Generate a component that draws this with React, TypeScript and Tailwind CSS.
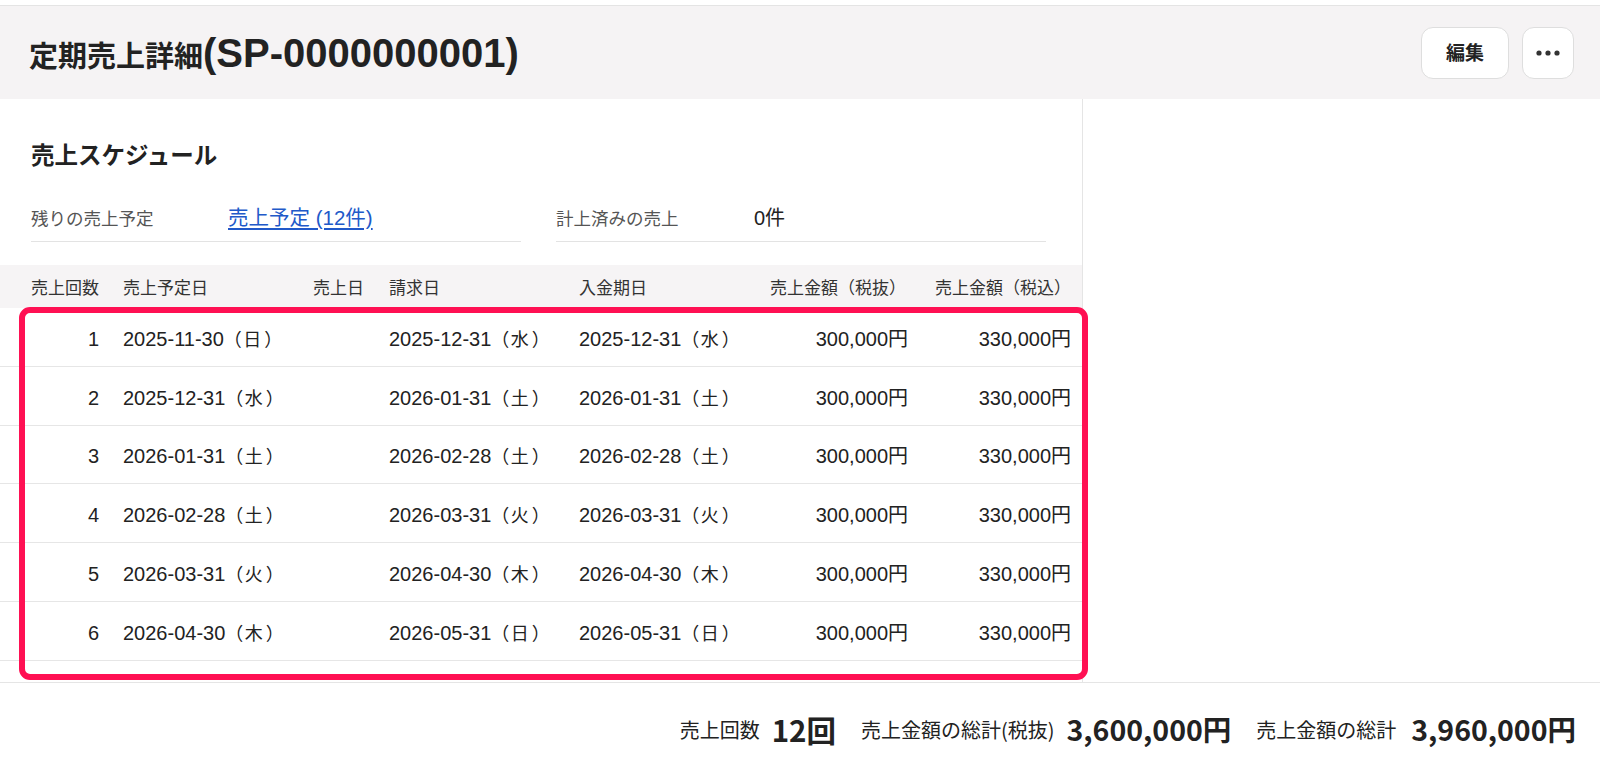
import React from 'react';

const latin = "font-['Liberation_Sans','Noto_Sans_CJK_JP',sans-serif]";
const cjk = "font-['Noto_Sans_CJK_JP','Liberation_Sans',sans-serif]";

type Row = {
  no: number;
  planned: [string, string];
  invoice: [string, string];
  payment: [string, string];
};

const rows: Row[] = [
  { no: 1, planned: ['2025-11-30', '日'], invoice: ['2025-12-31', '水'], payment: ['2025-12-31', '水'] },
  { no: 2, planned: ['2025-12-31', '水'], invoice: ['2026-01-31', '土'], payment: ['2026-01-31', '土'] },
  { no: 3, planned: ['2026-01-31', '土'], invoice: ['2026-02-28', '土'], payment: ['2026-02-28', '土'] },
  { no: 4, planned: ['2026-02-28', '土'], invoice: ['2026-03-31', '火'], payment: ['2026-03-31', '火'] },
  { no: 5, planned: ['2026-03-31', '火'], invoice: ['2026-04-30', '木'], payment: ['2026-04-30', '木'] },
  { no: 6, planned: ['2026-04-30', '木'], invoice: ['2026-05-31', '日'], payment: ['2026-05-31', '日'] },
  { no: 7, planned: ['2026-05-31', '日'], invoice: ['2026-06-30', '火'], payment: ['2026-06-30', '火'] },
];

const cols = 'grid grid-cols-[111px_189px_77px_190px_173px_178px_165px]';

// 日付 + 全角カッコの曜日
const DateCell = ({ d }: { d: [string, string] }) => (
  <div className="pl-3 whitespace-nowrap">
    <span className="text-[20px]">{d[0]}</span>
    <span className={`${cjk} text-[18px]`}>
      <span className="inline-block w-[18px] text-center">（</span>
      <span className="inline-block w-[21px] text-center">{d[1]}</span>
      <span className="inline-block w-[21px] text-center">）</span>
    </span>
  </div>
);

const App: React.FC = () => {
  return (
    <div className={`${latin} relative h-[776px] flex flex-col bg-white text-[#222] overflow-hidden`}>
      <div className="h-[6px] border-b border-[#e4e4e4] shrink-0" />

      {/* page header */}
      <header className="h-[93px] shrink-0 bg-[#f5f3f4] flex items-center justify-between pl-[29px] pr-[26px]">
        <h1 className="font-bold text-[#222] whitespace-nowrap leading-none">
          <span className={`${cjk} text-[29px]`}>定期売上詳細</span>
          <span className="text-[40px]">(SP-0000000001)</span>
        </h1>
        <div className="flex items-center gap-[13px]">
          <button className={`${cjk} h-[52px] w-[88px] rounded-[12px] bg-white border border-[#dedede] text-[19px] font-bold text-[#222]`}>
            編集
          </button>
          <button className="h-[52px] w-[52px] rounded-[12px] bg-white border border-[#dedede] flex items-center justify-center">
            <svg width="24" height="6" viewBox="0 0 24 6" fill="#333">
              <circle cx="3" cy="3" r="2.6" />
              <circle cx="12" cy="3" r="2.6" />
              <circle cx="21" cy="3" r="2.6" />
            </svg>
          </button>
        </div>
      </header>

      <div className="flex-1 min-h-0 flex">
        <div className="w-[1083px] border-r border-[#e5e5e5] flex flex-col overflow-hidden">
          <h2 className={`${cjk} pl-[31px] pt-[39px] text-[23.5px] leading-[32px] font-bold text-[#222]`}>
            売上スケジュール
          </h2>

          <div className="mt-[25px] flex">
            <div className="ml-[31px] w-[490px] h-[47px] border-b border-[#e3e3e3] flex items-center">
              <span className={`${cjk} w-[197px] text-[17.5px] text-[#555]`}>残りの売上予定</span>
              <a href="#" className="text-[20.5px] text-[#2159c9] underline underline-offset-[3px]">
                売上予定 (12件)
              </a>
            </div>
            <div className="ml-[35px] w-[490px] h-[47px] border-b border-[#e3e3e3] flex items-center">
              <span className={`${cjk} w-[198px] text-[17.5px] text-[#555]`}>計上済みの売上</span>
              <span className="text-[20px]">0件</span>
            </div>
          </div>

          <div className="mt-[23px]">
            <div className={`${cols} ${cjk} h-[43px] items-center bg-[#f6f4f5] text-[17px] text-[#333] whitespace-nowrap`}>
              <div className="text-right pr-3">売上回数</div>
              <div className="pl-3">売上予定日</div>
              <div className="text-right pr-[13px]">売上日</div>
              <div className="pl-3">請求日</div>
              <div className="pl-3">入金期日</div>
              <div className="text-right pr-3">売上金額（税抜）</div>
              <div className="text-right pr-3">売上金額（税込）</div>
            </div>
            {rows.map((r) => (
              <div key={r.no} className={`${cols} h-[58.8px] pt-1 items-center border-b border-[#e6e6e6] text-[#222]`}>
                <div className="text-right pr-3 text-[20px]">{r.no}</div>
                <DateCell d={r.planned} />
                <div />
                <DateCell d={r.invoice} />
                <DateCell d={r.payment} />
                <div className="text-right pr-[10px] text-[20px]">300,000円</div>
                <div className="text-right pr-3 text-[20px]">330,000円</div>
              </div>
            ))}
          </div>
        </div>
      </div>

      {/* totals */}
      <footer className={`${cjk} h-[94px] shrink-0 border-t border-[#e5e5e5] flex items-center justify-end gap-[25px] pr-[24px] text-[#222]`}>
        <div className="flex items-center gap-3">
          <span className="text-[20px]">売上回数</span>
          <span className="text-[29.5px] font-bold">12回</span>
        </div>
        <div className="flex items-center gap-3">
          <span className="text-[20px]">売上金額の総計(税抜)</span>
          <span className="text-[28.5px] font-bold">3,600,000円</span>
        </div>
        <div className="flex items-center gap-[15px]">
          <span className="text-[20px]">売上金額の総計</span>
          <span className="text-[28.5px] font-bold">3,960,000円</span>
        </div>
      </footer>

      {/* highlight annotation */}
      <div className="absolute left-[19px] top-[307px] w-[1069px] h-[373px] border-[6px] border-[#ff1053] rounded-[11px] pointer-events-none" />
    </div>
  );
};

export default App;
